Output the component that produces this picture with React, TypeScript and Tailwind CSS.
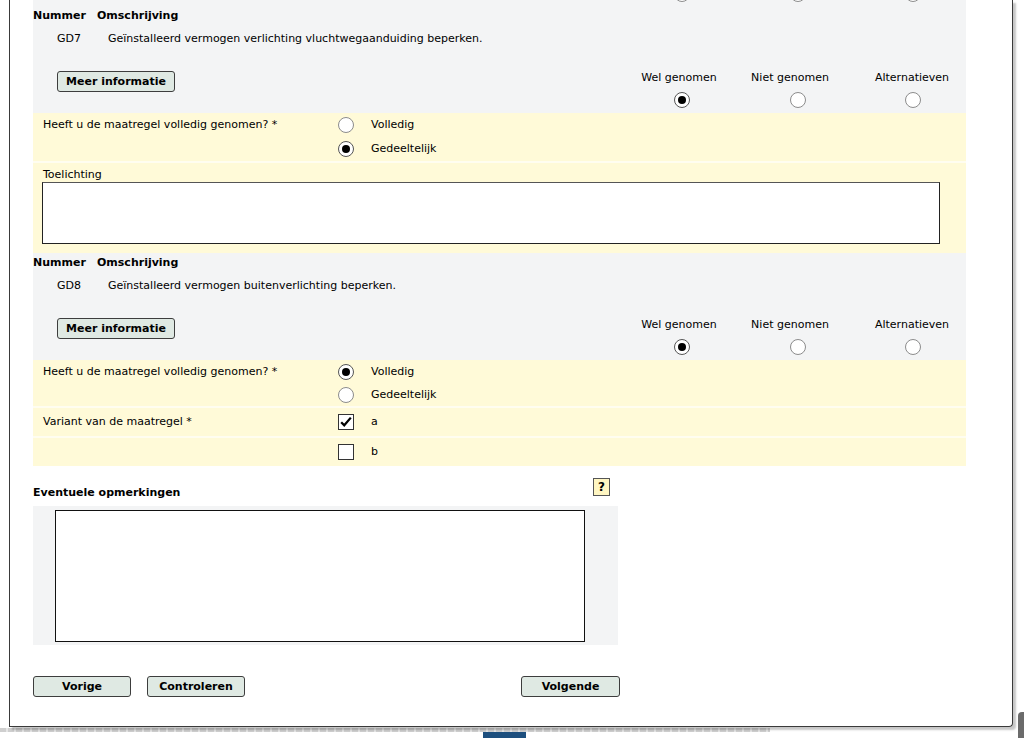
import React from 'react';

const GRAY = 'bg-[#f3f4f5]';
const YELLOW = 'bg-[#fffad8]';

function Radio({ checked }: { checked?: boolean }) {
  return (
    <span
      className={`w-4 h-4 shrink-0 rounded-full border bg-white flex items-center justify-center ${
        checked ? 'border-[#555]' : 'border-[#8c8c8c]'
      }`}
    >
      {checked && <span className="w-2 h-2 rounded-full bg-black" />}
    </span>
  );
}

function Checkbox({ checked }: { checked?: boolean }) {
  return (
    <span className="w-4 h-4 shrink-0 border border-[#333] bg-white flex items-center justify-center">
      {checked && (
        <svg viewBox="0 0 16 16" className="w-[14px] h-[14px]">
          <path d="M2.5 8.2 L6 11.8 L13.5 3" fill="none" stroke="#000" strokeWidth="2.6" />
        </svg>
      )}
    </span>
  );
}

function Btn({ children, className = '' }: { children: React.ReactNode; className?: string }) {
  return (
    <button
      className={`h-[21px] border border-[#3d3d3d] rounded-[3px] bg-[#dfe9e3] font-bold text-[11px] leading-none text-black ${className}`}
    >
      {children}
    </button>
  );
}

type Keuze = 'wel' | 'niet' | 'alt';

function KeuzeKolommen({ value, labels = true }: { value?: Keuze; labels?: boolean }) {
  const cols: { key: Keuze; label: string; w: string; off: string }[] = [
    { key: 'wel', label: 'Wel genomen', w: 'w-[110px]', off: 'ml-[6px]' },
    { key: 'niet', label: 'Niet genomen', w: 'w-[112px]', off: 'ml-[16px]' },
    { key: 'alt', label: 'Alternatieven', w: 'w-[100px] ml-[16px]', off: 'ml-[2px]' },
  ];
  return (
    <div className="ml-auto flex pr-[4px]">
      {cols.map((c) => (
        <div key={c.key} className={`${c.w} flex flex-col items-center`}>
          {labels && <span className="h-[14px] leading-[14px] mb-[7px] mt-[1px]">{c.label}</span>}
          <span className={c.off}>
            <Radio checked={value === c.key} />
          </span>
        </div>
      ))}
    </div>
  );
}

function Kop({ code, text }: { code: string; text: string }) {
  return (
    <div className={GRAY}>
      <div className="h-[20px] pt-[1px] flex items-center font-bold">
        <span className="w-[64px]">Nummer</span>
        <span>Omschrijving</span>
      </div>
      <div className="h-[26px] pt-[1px] flex items-center pl-[24px]">
        <span className="w-[51px]">{code}</span>
        <span>{text}</span>
      </div>
      <div className="h-[61px] flex pt-[18px]">
        <div className="pl-[24px] pt-[1px]">
          <Btn className="w-[118px]">Meer informatie</Btn>
        </div>
        <KeuzeKolommen value="wel" />
      </div>
    </div>
  );
}

function Volledig({ value, rowH }: { value: 'vol' | 'deel'; rowH: string }) {
  return (
    <div className={`${YELLOW} flex pl-[10px]`}>
      <div className={`w-[295px] ${rowH} pt-[1px] flex items-center`}>Heeft u de maatregel volledig genomen? *</div>
      <div className="flex flex-col">
        <div className={`${rowH} flex items-center`}>
          <Radio checked={value === 'vol'} />
          <span className="ml-[17px] pt-[1px]">Volledig</span>
        </div>
        <div className={`${rowH} flex items-center`}>
          <Radio checked={value === 'deel'} />
          <span className="ml-[17px] pt-[1px]">Gedeeltelijk</span>
        </div>
      </div>
    </div>
  );
}

const Sep = () => <div className="h-[2px] bg-[#fffdf0]" />;

export default function App() {
  return (
    <div className="w-[1024px] h-[738px] overflow-hidden bg-white text-[11px] text-black font-['DejaVu_Sans',Verdana,sans-serif]">
      <div className="flex items-start">
        <div className="ml-[9px] w-[1004px] border-l border-r border-b border-[#3a3a3a] rounded-br-[4px] shadow-[3px_3px_2px_rgba(0,0,0,0.22)] pl-[23px] pb-[29px]">
          <div className="w-[933px]">
            {/* vorige maatregel, afgesneden */}
            <div className={`${GRAY} h-[6px] overflow-hidden flex`}>
              <div className="-mt-[14px] w-full flex">
                <KeuzeKolommen labels={false} />
              </div>
            </div>

            <Kop code="GD7" text="Geïnstalleerd vermogen verlichting vluchtwegaanduiding beperken." />
            <Volledig value="deel" rowH="h-[24px]" />
            <Sep />
            <div className={`${YELLOW} pl-[9px] pt-[4px] pb-[9px]`}>
              <div className="h-[14px] leading-[14px] ml-[1px] pt-[1px]">Toelichting</div>
              <textarea className="block mt-[1px] w-[898px] h-[62px] border border-[#222] border-t-[#555] bg-white resize-none outline-none" />
            </div>

            <Kop code="GD8" text="Geïnstalleerd vermogen buitenverlichting beperken." />
            <Volledig value="vol" rowH="h-[23px]" />
            <Sep />
            <div className={`${YELLOW} h-[28px] flex items-center pl-[10px]`}>
              <span className="w-[295px] pt-[1px]">Variant van de maatregel *</span>
              <Checkbox checked />
              <span className="ml-[17px] pt-[1px]">a</span>
            </div>
            <Sep />
            <div className={`${YELLOW} h-[28px] flex items-center pl-[10px]`}>
              <span className="w-[295px]" />
              <Checkbox />
              <span className="ml-[17px] pt-[1px]">b</span>
            </div>

            <div className="w-[585px] h-[40px] flex justify-between pr-[8px]">
              <span className="mt-[20px] h-[14px] leading-[14px] font-bold">Eventuele opmerkingen</span>
              <span className="mt-[12px] w-[17px] h-[18px] border border-[#555] bg-[#fff6c2] flex items-center justify-center font-bold text-[12px]">
                ?
              </span>
            </div>
            <div className={`${GRAY} w-[585px] h-[139px] pl-[22px] pt-[4px]`}>
              <textarea className="block w-[530px] h-[132px] border border-[#111] bg-white resize-none outline-none" />
            </div>

            <div className="flex mt-[31px]">
              <Btn className="w-[98px]">Vorige</Btn>
              <Btn className="w-[98px] ml-[16px]">Controleren</Btn>
              <Btn className="w-[99px] ml-[276px]">Volgende</Btn>
            </div>
          </div>
        </div>
        <div className="ml-[5px] mt-[712px] -mb-[11px] w-[6px] h-[26px] bg-[#6b6b6b] rounded-tl-[4px]" />
      </div>
      <div className="mt-[1px] w-[770px] h-[4px] bg-[repeating-linear-gradient(90deg,#cfcfcf_0px,#cfcfcf_6px,#e6e6e6_6px,#e6e6e6_8px)]" />
      <div className="ml-[483px] w-[43px] h-[8px] bg-[#1d4f7e]" />
    </div>
  );
}
